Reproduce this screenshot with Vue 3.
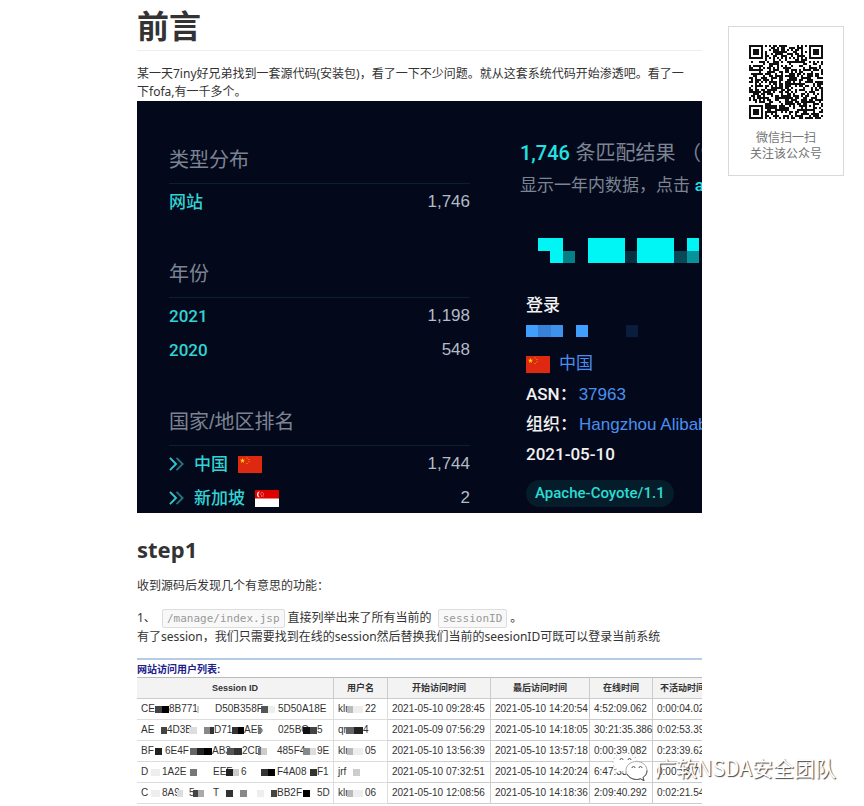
<script setup>
const statGroups = [
  { title: '类型分布', rows: [{ name: '网站', count: '1,746' }] },
  { title: '年份', rows: [{ name: '2021', count: '1,198' }, { name: '2020', count: '548' }] },
  {
    title: '国家/地区排名',
    rows: [
      { name: '中国', count: '1,744', flag: 'cn' },
      { name: '新加坡', count: '2', flag: 'sg' },
    ],
  },
]

const columns = [
  { label: 'Session ID', width: 197 },
  { label: '用户名', width: 54 },
  { label: '开始访问时间', width: 103 },
  { label: '最后访问时间', width: 99 },
  { label: '在线时间', width: 63 },
  { label: '不活动时间', width: 60 },
]

// Each piece is [start, end, text or mosaic colour], measured from the cell edge.
const sessions = [
  {
    id: [[4, 18, 'CE'], [18, 25, '#444'], [25, 32, '#000'], [32, 60, '8B771'], [60, 62, '#ccc'], [78, 122, 'D50B358F'], [124, 131, '#555'], [131, 138, '#eee'], [141, 184, '5D50A18E']],
    user: [[4, 13, 'klr'], [13, 19, '#bbb'], [19, 29, '#eee'], [31, 42, '22']],
    times: ['2021-05-10 09:28:45', '2021-05-10 14:20:54', '4:52:09.062', '0:00:04.021'],
  },
  {
    id: [[4, 18, 'AE'], [24, 30, '#444'], [30, 52, '4D3B'], [52, 60, '#ddd'], [67, 73, '#888'], [73, 77, '#333'], [77, 95, 'D71'], [95, 101, '#333'], [101, 107, '#000'], [107, 121, 'AE5'], [121, 124, '#777'], [141, 166, '025BC'], [166, 173, '#111'], [173, 180, '#444'], [180, 186, '5']],
    user: [[4, 12, 'qr'], [12, 20, '#666'], [20, 29, '#222'], [29, 36, '4']],
    times: ['2021-05-09 07:56:29', '2021-05-10 14:18:05', '30:21:35.386', '0:02:53.398'],
  },
  {
    id: [[4, 14, 'BF'], [18, 25, '#222'], [28, 50, '6E4F'], [53, 60, '#666'], [60, 67, '#222'], [67, 75, '#000'], [75, 90, 'AB3'], [90, 97, '#555'], [97, 105, '#333'], [105, 121, '2CD'], [121, 124, '#777'], [124, 130, '#ccc'], [140, 165, '485F4'], [166, 173, '#888'], [173, 179, '#ddd'], [180, 192, '9E']],
    user: [[4, 13, 'klr'], [13, 19, '#bbb'], [19, 29, '#eee'], [31, 42, '05']],
    times: ['2021-05-10 13:56:39', '2021-05-10 13:57:18', '0:00:39.082', '0:23:39.629'],
  },
  {
    id: [[4, 12, 'D'], [14, 23, '#eee'], [25, 46, '1A2E'], [53, 60, '#777'], [76, 89, 'EEF'], [89, 96, '#222'], [96, 102, '#ccc'], [104, 112, '6'], [124, 131, '#333'], [131, 138, '#000'], [140, 166, 'F4A08'], [173, 180, '#333'], [180, 190, 'F1']],
    user: [[4, 16, 'jrf'], [19, 26, '#ccc']],
    times: ['2021-05-10 07:32:51', '2021-05-10 14:20:24', '6:47:33.348', '0:00:33.701'],
  },
  {
    id: [[4, 12, 'C'], [14, 23, '#eee'], [25, 40, '8A9'], [40, 46, '#ddd'], [52, 56, '5'], [56, 61, '#444'], [61, 67, '#aaa'], [76, 82, 'T'], [89, 96, '#333'], [103, 110, '#888'], [120, 127, '#eee'], [134, 140, '#444'], [140, 164, 'BB2F'], [166, 173, '#000'], [180, 194, '5D']],
    user: [[4, 13, 'klr'], [13, 19, '#bbb'], [19, 29, '#eee'], [31, 42, '06']],
    times: ['2021-05-10 12:08:56', '2021-05-10 14:18:36', '2:09:40.292', '0:02:21.543'],
  },
]

function pieces(list) {
  let cursor = 0
  return list.map(([start, end, value]) => {
    const mosaic = value.startsWith('#')
    const style = { marginLeft: `${start - cursor}px`, width: `${end - start}px` }
    if (mosaic) style.background = value
    cursor = end
    return { mosaic, text: mosaic ? '' : value, style }
  })
}

function finder(x, y, cx, cy, radius) {
  const d = Math.max(Math.abs(x - cx), Math.abs(y - cy))
  if (d > radius + 1) return null
  if (radius === 3) return d === 3 || d <= 1
  return d <= radius ? d !== 1 : null
}

function qrPath() {
  const size = 37
  let seed = 20210510
  let path = ''
  for (let y = 0; y < size; y++) {
    for (let x = 0; x < size; x++) {
      seed = (seed * 1103515245 + 12345) % 2147483648
      let on = (seed / 2147483648) > 0.43
      if (y === 6 || x === 6) on = (x + y) % 2 === 0
      for (const [cx, cy, r] of [[3, 3, 3], [33, 3, 3], [3, 33, 3], [30, 30, 2]]) {
        const hit = finder(x, y, cx, cy, r)
        if (hit !== null) on = hit
      }
      if (on) path += `M${x} ${y}h1v1h-1z`
    }
  }
  return path
}
const qr = qrPath()
</script>

<template>
  <div class="page">
    <main class="article">
      <h1>前言</h1>
      <p class="intro">某一天7iny好兄弟找到一套源代码(安装包)，看了一下不少问题。就从这套系统代码开始渗透吧。看了一<br>下fofa,有一千多个。</p>

      <figure class="search">
        <div class="stats">
          <section v-for="group in statGroups" :key="group.title" class="group">
            <h3>{{ group.title }}</h3>
            <div v-for="row in group.rows" :key="row.name" class="stat">
              <svg v-if="row.flag" class="chevrons" viewBox="0 0 16 14" aria-hidden="true">
                <path d="M1 0.5L7.5 7L1 13.5" stroke="#2fc9cf" />
                <path d="M8 0.5L14.5 7L8 13.5" stroke="#23757f" />
              </svg>
              <span class="name">{{ row.name }}</span>
              <svg v-if="row.flag === 'cn'" class="flag" viewBox="0 0 24 17" aria-hidden="true">
                <path d="M0 0h24v17H0z" fill="#de2910" />
                <path d="M4.5 2l.6 1.8H7L5.500 5l.6 1.900-1.600-1.200L2.900 6.900 3.500 5 2 3.800h1.900z" fill="#ffde00" />
                <path d="M8.500 1.500h1v1h-1zM10.500 3h1v1h-1zM10.500 5.300h1v1h-1zM8.500 7h1v1h-1z" fill="#e8a317" />
              </svg>
              <svg v-else-if="row.flag === 'sg'" class="flag" viewBox="0 0 24 17" aria-hidden="true">
                <path d="M0 0h24v17H0z" fill="#fff" />
                <path d="M0 0h24v8.500H0z" fill="#df0000" />
                <path d="M5 1.500a3 3 0 1 0 0 6a3.500 3.500 0 0 1 0-6z" fill="#fff" />
                <path d="M6.500 2h1v1h-1zM5.300 3.500h1v1h-1zM8 3.500h1v1h-1zM6 5.500h1v1h-1zM7.500 5.500h1v1h-1z" fill="#f7b5b5" />
              </svg>
              <span class="count">{{ row.count }}</span>
            </div>
          </section>
        </div>

        <div class="results">
          <div class="total"><b>1,746</b> 条匹配结果 （<b>9</b></div>
          <div class="hint">显示一年内数据，点击 <b>all</b></div>
          <svg class="mosaic-title" viewBox="0 0 13 2" preserveAspectRatio="none" shape-rendering="crispEdges" aria-hidden="true">
            <path d="M0 0h2v2H1V1H0zM4 0h3v2H4zM8 0h3v2H8zM12 0h1v1h-1z" fill="#00f5f5" />
            <path d="M2 1h1v1H2z" fill="#048087" />
            <path d="M7 1h1v1H7z" fill="#04303f" />
            <path d="M11 1h1v1h-1z" fill="#084958" />
            <path d="M12 1h1v1h-1z" fill="#07939b" />
          </svg>
          <div class="entry">
            <div class="line strong">登录</div>
            <svg class="mosaic-host" viewBox="0 0 9 1" preserveAspectRatio="none" shape-rendering="crispEdges" aria-hidden="true">
              <path d="M0 0h1v1H0zM4 0h1v1H4z" fill="#409eff" />
              <path d="M1 0h1v1H1z" fill="#3881d8" />
              <path d="M2 0h1v1H2z" fill="#3f92ec" />
              <path d="M8 0h1v1H8z" fill="#0b1d3c" />
            </svg>
            <div class="line place">
              <svg class="flag" viewBox="0 0 24 17" aria-hidden="true">
                <path d="M0 0h24v17H0z" fill="#de2910" />
                <path d="M4.500 2l.6 1.800H7L5.500 5l.6 1.900-1.600-1.200L2.900 6.900 3.500 5 2 3.800h1.900z" fill="#ffde00" />
                <path d="M8.500 1.500h1v1h-1zM10.500 3h1v1h-1zM10.500 5.300h1v1h-1zM8.500 7h1v1h-1z" fill="#e8a317" />
              </svg>
              <a href="#">中国</a>
            </div>
            <div class="line"><span class="strong label">ASN：</span><a href="#">37963</a></div>
            <div class="line"><span class="strong label">组织：</span><a href="#">Hangzhou Alibaba</a></div>
            <div class="line strong">2021-05-10</div>
            <span class="tag">Apache-Coyote/1.1</span>
          </div>
        </div>
      </figure>

      <h2>step1</h2>
      <p>收到源码后发现几个有意思的功能：</p>
      <p class="detail">1、 <code>/manage/index.jsp</code>直接列举出来了所有当前的 <code>sessionID</code>。<br>有了session，我们只需要找到在线的session然后替换我们当前的seesionID可既可以登录当前系统</p>

      <figure class="users">
        <table>
          <caption>网站访问用户列表:</caption>
          <colgroup>
            <col v-for="col in columns" :key="col.label" :style="{ width: col.width + 'px' }">
          </colgroup>
          <thead>
            <tr><th v-for="col in columns" :key="col.label" scope="col">{{ col.label }}</th></tr>
          </thead>
          <tbody>
            <tr v-for="(row, i) in sessions" :key="i">
              <td v-for="key in ['id', 'user']" :key="key" class="masked">
                <div class="pieces">
                  <span v-for="(p, j) in pieces(row[key])" :key="j" :class="p.mosaic ? 'block' : 'text'" :style="p.style">{{ p.text }}</span>
                </div>
              </td>
              <td v-for="time in row.times" :key="time">{{ time }}</td>
            </tr>
          </tbody>
        </table>
      </figure>
    </main>

    <aside class="follow">
      <svg class="qr" viewBox="0 0 37 37" shape-rendering="crispEdges" role="img"><path :d="qr" /></svg>
      <p>微信扫一扫<br>关注该公众号</p>
    </aside>

    <div class="watermark">
      <svg viewBox="0 0 36 30" aria-hidden="true">
        <path d="M13 1C6 1 1 5 1 10.500c0 3 1.500 5.500 4 7L4 21l4-2c1.500.5 3 .7 5 .7c7 0 12-4 12-9.200S20 1 13 1z" fill="#fff" stroke="#999" stroke-width="1" stroke-dasharray="1 3" />
        <path d="M24.500 9.500c-6 0-10.500 4-10.500 9s4.500 9 10.500 9c1.500 0 3-.3 4-.7l3.500 2-1-3.300c2.500-1.600 4-4 4-7c0-5-4.500-9-10.500-9z" fill="#fff" stroke="#aaa" stroke-width="1" />
        <path d="M15 22c2 3.500 5.500 5.500 9.500 5.500c1.500 0 3-.3 4-.7l3.500 2-1-3.300c2.500-1.600 4-4 4-7" fill="none" stroke="#555" stroke-width="1" />
        <path d="M8 8a1.500 1.500 0 0 1 3 0M16 8a1.500 1.500 0 0 1 3 0M20 16a1.400 1.400 0 0 1 3 0M27 16a1.400 1.400 0 0 1 3 0" fill="none" stroke="#555" />
      </svg>
      <span>广软NSDA安全团队</span>
    </div>
  </div>
</template>

<style>
body {
  margin: 0;
  background: #fff;
}
</style>

<style scoped>
.page {
  position: relative;
  display: grid;
  grid-template-columns: minmax(0, 1fr) 116px;
  column-gap: 26px;
  align-items: start;
  padding: 5px 20px 0 137px;
  overflow: hidden;
  color: #333;
  font-family: "Noto Sans", "Noto Sans CJK SC", sans-serif;
  font-size: 12px;
  line-height: 18px;
}

h1, h2, h3, p, figure {
  margin: 0;
}

h1 {
  padding-bottom: 7px;
  border-bottom: 1px solid #eee;
  font-family: "Noto Sans CJK SC", sans-serif;
  font-size: 32px;
  line-height: 38px;
}

h2 {
  margin: 21px 0 13px;
  font-size: 22px;
  line-height: 30px;
}

p {
  overflow-wrap: break-word;
}

.intro {
  margin-top: 14px;
}

.detail {
  margin-top: 14px;
}

code {
  margin: 0 3px;
  padding: 2px 4px;
  border: 1px solid #ddd;
  border-radius: 2px;
  background: #f8f8f8;
  color: #999;
  font-family: "DejaVu Sans Mono", monospace;
  font-size: 11px;
}

a {
  color: #4a8ff0;
  text-decoration: none;
}

.search {
  display: grid;
  grid-template-columns: 301px minmax(0, 1fr);
  column-gap: 50px;
  box-sizing: border-box;
  height: 412px;
  padding-left: 32px;
  overflow: hidden;
  background: #03091b;
  color: #b3bbc7;
  font-family: "Liberation Sans", "Noto Sans CJK SC", sans-serif;
  font-size: 17px;
  white-space: nowrap;
}

.stats {
  padding-top: 44px;
}

.group {
  margin-bottom: 40px;
}

.group h3 {
  margin-bottom: 1px;
  padding-bottom: 8px;
  border-bottom: 1px solid #04252e;
  color: #7c8493;
  font-size: 20px;
  font-weight: 400;
  line-height: 30px;
}

.stat {
  display: flex;
  align-items: center;
  gap: 10px;
  height: 34px;
}

.chevrons {
  width: 15px;
  height: 14px;
  fill: none;
  stroke-width: 2;
}

.name {
  color: #31d3d3;
  font-family: Roboto, "Noto Sans CJK SC", sans-serif;
  font-weight: 500;
}

.flag {
  flex: none;
  width: 24px;
  height: 17px;
}

.count {
  margin-left: auto;
}

.results {
  padding-top: 36px;
}

.total,
.hint {
  color: #7c8493;
  line-height: 32px;
}

.total {
  font-size: 20px;
}

.total b,
.hint b {
  color: #22e3e3;
  font-family: Roboto, sans-serif;
  font-weight: 500;
}

.mosaic-title {
  display: block;
  width: 161px;
  height: 25px;
  margin: 36px 0 27px 18px;
}

.entry {
  padding-left: 6px;
}

.line {
  height: 30px;
  line-height: 30px;
}

.strong {
  color: #f2f2f2;
  font-family: Roboto, "Noto Sans CJK SC", sans-serif;
  font-weight: 500;
}

.label {
  margin-right: 2px;
}

.mosaic-host {
  display: block;
  width: 112px;
  height: 12px;
  margin: 5px 0 12px;
}

.place {
  display: flex;
  align-items: center;
  gap: 9px;
}

.tag {
  display: inline-block;
  margin-top: 11px;
  padding: 0 9px;
  border-radius: 14px;
  background: #051c2b;
  color: #2bdcd3;
  font-family: Roboto, sans-serif;
  font-size: 15px;
  font-weight: 500;
  line-height: 27px;
}

.users {
  margin-top: 12px;
  overflow: hidden;
  border-top: 2px solid #b5cbe6;
  color: #333;
  font-family: "Liberation Sans", "Noto Sans CJK SC", sans-serif;
}

table {
  width: 576px;
  table-layout: fixed;
  border-spacing: 0;
  font-size: 10px;
  line-height: 20px;
  white-space: nowrap;
}

caption {
  height: 17px;
  color: #20208c;
  font-weight: 700;
  line-height: 20px;
  text-align: left;
}

th,
td {
  box-sizing: border-box;
  height: 21px;
  padding: 0 0 0 4px;
  border-right: 1px solid #ccc;
  border-bottom: 1px solid #ccc;
  text-align: left;
}

th {
  height: 22px;
  padding: 0;
  border-top: 1px solid #bbb;
  background: #f3f3f3;
  font-size: 9px;
  text-align: center;
}

.masked {
  padding: 0;
  border-right-color: #ddd;
  border-bottom-color: #ddd;
}

.pieces {
  display: flex;
  align-items: center;
  height: 20px;
}

.pieces span {
  flex: none;
}

.block {
  height: 7px;
}

.follow {
  margin-top: 21px;
  padding: 18px 0 13px;
  border: 1px solid #d9d9d9;
  color: #717375;
  line-height: 16px;
  text-align: center;
}

.qr {
  display: block;
  width: 74px;
  height: 74px;
  margin: 0 auto 11px;
  fill: #111;
}

.watermark {
  position: absolute;
  right: 28px;
  bottom: 22px;
  display: flex;
  align-items: center;
  gap: 7px;
  color: #fff;
  font-family: "Noto Sans CJK SC", sans-serif;
  font-size: 21px;
  line-height: 30px;
  text-shadow: 1px 1px 1px #444;
}

.watermark svg {
  width: 36px;
  height: 30px;
}
</style>
